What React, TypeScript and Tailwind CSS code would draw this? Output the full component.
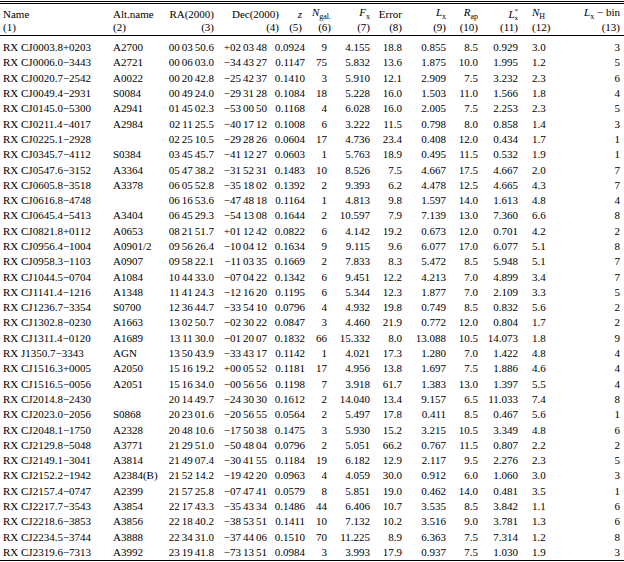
const rows: string[][] = [
  ["RX CJ0003.8+0203", "A2700", "00 03 50.6", "+02 03 48", "0.0924", "9", "4.155", "18.8", "0.855", "8.5", "0.929", "3.0", "3"],
  ["RX CJ0006.0−3443", "A2721", "00 06 03.0", "−34 43 27", "0.1147", "75", "5.832", "13.6", "1.875", "10.0", "1.995", "1.2", "5"],
  ["RX CJ0020.7−2542", "A0022", "00 20 42.8", "−25 42 37", "0.1410", "3", "5.910", "12.1", "2.909", "7.5", "3.232", "2.3", "6"],
  ["RX CJ0049.4−2931", "S0084", "00 49 24.0", "−29 31 28", "0.1084", "18", "5.228", "16.0", "1.503", "11.0", "1.566", "1.8", "4"],
  ["RX CJ0145.0−5300", "A2941", "01 45 02.3", "−53 00 50", "0.1168", "4", "6.028", "16.0", "2.005", "7.5", "2.253", "2.3", "5"],
  ["RX CJ0211.4−4017", "A2984", "02 11 25.5", "−40 17 12", "0.1008", "6", "3.222", "11.5", "0.798", "8.0", "0.858", "1.4", "3"],
  ["RX CJ0225.1−2928", "", "02 25 10.5", "−29 28 26", "0.0604", "17", "4.736", "23.4", "0.408", "12.0", "0.434", "1.7", "1"],
  ["RX CJ0345.7−4112", "S0384", "03 45 45.7", "−41 12 27", "0.0603", "1", "5.763", "18.9", "0.495", "11.5", "0.532", "1.9", "1"],
  ["RX CJ0547.6−3152", "A3364", "05 47 38.2", "−31 52 31", "0.1483", "10", "8.526", "7.5", "4.667", "17.5", "4.667", "2.0", "7"],
  ["RX CJ0605.8−3518", "A3378", "06 05 52.8", "−35 18 02", "0.1392", "2", "9.393", "6.2", "4.478", "12.5", "4.665", "4.3", "7"],
  ["RX CJ0616.8−4748", "", "06 16 53.6", "−47 48 18", "0.1164", "1", "4.813", "9.8", "1.597", "14.0", "1.613", "4.8", "4"],
  ["RX CJ0645.4−5413", "A3404", "06 45 29.3", "−54 13 08", "0.1644", "2", "10.597", "7.9", "7.139", "13.0", "7.360", "6.6", "8"],
  ["RX CJ0821.8+0112", "A0653", "08 21 51.7", "+01 12 42", "0.0822", "6", "4.142", "19.2", "0.673", "12.0", "0.701", "4.2", "2"],
  ["RX CJ0956.4−1004", "A0901/2", "09 56 26.4", "−10 04 12", "0.1634", "9", "9.115", "9.6", "6.077", "17.0", "6.077", "5.1", "8"],
  ["RX CJ0958.3−1103", "A0907", "09 58 22.1", "−11 03 35", "0.1669", "2", "7.833", "8.3", "5.472", "8.5", "5.948", "5.1", "7"],
  ["RX CJ1044.5−0704", "A1084", "10 44 33.0", "−07 04 22", "0.1342", "6", "9.451", "12.2", "4.213", "7.0", "4.899", "3.4", "7"],
  ["RX CJ1141.4−1216", "A1348", "11 41 24.3", "−12 16 20", "0.1195", "6", "5.344", "12.3", "1.877", "7.0", "2.109", "3.3", "5"],
  ["RX CJ1236.7−3354", "S0700", "12 36 44.7", "−33 54 10", "0.0796", "4", "4.932", "19.8", "0.749", "8.5", "0.832", "5.6", "2"],
  ["RX CJ1302.8−0230", "A1663", "13 02 50.7", "−02 30 22", "0.0847", "3", "4.460", "21.9", "0.772", "12.0", "0.804", "1.7", "2"],
  ["RX CJ1311.4−0120", "A1689", "13 11 30.0", "−01 20 07", "0.1832", "66", "15.332", "8.0", "13.088", "10.5", "14.073", "1.8", "9"],
  ["RX J1350.7−3343", "AGN", "13 50 43.9", "−33 43 17", "0.1142", "1", "4.021", "17.3", "1.280", "7.0", "1.422", "4.8", "4"],
  ["RX CJ1516.3+0005", "A2050", "15 16 19.2", "+00 05 52", "0.1181", "17", "4.956", "13.8", "1.697", "7.5", "1.886", "4.6", "4"],
  ["RX CJ1516.5−0056", "A2051", "15 16 34.0", "−00 56 56", "0.1198", "7", "3.918", "61.7", "1.383", "13.0", "1.397", "5.5", "4"],
  ["RX CJ2014.8−2430", "", "20 14 49.7", "−24 30 30", "0.1612", "2", "14.040", "13.4", "9.157", "6.5", "11.033", "7.4", "8"],
  ["RX CJ2023.0−2056", "S0868", "20 23 01.6", "−20 56 55", "0.0564", "2", "5.497", "17.8", "0.411", "8.5", "0.467", "5.6", "1"],
  ["RX CJ2048.1−1750", "A2328", "20 48 10.6", "−17 50 38", "0.1475", "3", "5.930", "15.2", "3.215", "10.5", "3.349", "4.8", "6"],
  ["RX CJ2129.8−5048", "A3771", "21 29 51.0", "−50 48 04", "0.0796", "2", "5.051", "66.2", "0.767", "11.5", "0.807", "2.2", "2"],
  ["RX CJ2149.1−3041", "A3814", "21 49 07.4", "−30 41 55", "0.1184", "19", "6.182", "12.9", "2.117", "9.5", "2.276", "2.3", "5"],
  ["RX CJ2152.2−1942", "A2384(B)", "21 52 14.2", "−19 42 20", "0.0963", "4", "4.059", "30.0", "0.912", "6.0", "1.060", "3.0", "3"],
  ["RX CJ2157.4−0747", "A2399", "21 57 25.8", "−07 47 41", "0.0579", "8", "5.851", "19.0", "0.462", "14.0", "0.481", "3.5", "1"],
  ["RX CJ2217.7−3543", "A3854", "22 17 43.3", "−35 43 34", "0.1486", "44", "6.406", "10.7", "3.535", "8.5", "3.842", "1.1", "6"],
  ["RX CJ2218.6−3853", "A3856", "22 18 40.2", "−38 53 51", "0.1411", "10", "7.132", "10.2", "3.516", "9.0", "3.781", "1.3", "6"],
  ["RX CJ2234.5−3744", "A3888", "22 34 31.0", "−37 44 06", "0.1510", "70", "11.225", "8.9", "6.363", "7.5", "7.314", "1.2", "8"],
  ["RX CJ2319.6−7313", "A3992", "23 19 41.8", "−73 13 51", "0.0984", "3", "3.993", "17.9", "0.937", "7.5", "1.030", "1.9", "3"],
];

// column widths add up to 620px; right-aligned unless listed in leftCols
const grid =
  "grid grid-cols-[110px_60px_44px_53px_38px_22px_43px_32px_44px_32px_40px_42px_60px]";
const leftCols = [0, 1, 11];

function Cell({
  i,
  children,
  className = "",
}: {
  i: number;
  children: React.ReactNode;
  className?: string;
}) {
  const left = leftCols.includes(i);
  return (
    <div
      className={`flex whitespace-nowrap ${left ? "justify-start" : "justify-end"} ${
        i === 0 || i === 1 ? "pl-[3px]" : ""
      } ${i === 11 ? "pl-[14px]" : ""} ${className}`}
    >
      {children}
    </div>
  );
}

// sexagesimal coords use tighter spacing than a normal word space
function Coord({ value }: { value: string }) {
  return (
    <span className="flex gap-[2px]">
      {value.split(" ").map((p, k) => (
        <span key={k}>{p}</span>
      ))}
    </span>
  );
}

const sub = "text-[8px] align-sub not-italic";

// header labels that sit a little off their column edge
const headShift = ["", "", "", "mr-[-12px]", "pr-[3px]", "mr-[-4px]", "", "", "", "", "", "", ""];

const head: React.ReactNode[] = [
  "Name",
  "Alt.name",
  "RA(2000)",
  "Dec(2000)",
  <i>z</i>,
  <span>
    <i>N</i>
    <span className={sub}>gal.</span>
  </span>,
  <span>
    <i>F</i>
    <span className={sub}>x</span>
  </span>,
  "Error",
  <span>
    <i>L</i>
    <span className={sub}>x</span>
  </span>,
  <span>
    <i>R</i>
    <span className={sub}>ap</span>
  </span>,
  <span className="inline-flex items-center">
    <i>L</i>
    <span className="inline-flex flex-col text-[7px] leading-[7px] mt-[2px]">
      <span>*</span>
      <span>x</span>
    </span>
  </span>,
  <span>
    <i>N</i>
    <span className={sub}>H</span>
  </span>,
  <span>
    <i>L</i>
    <span className={sub}>x</span> − bin
  </span>,
];

export default function App() {
  return (
    <div className="w-[624px] h-[562px] bg-white text-black font-['Liberation_Serif',serif] text-[11px] leading-none overflow-hidden">
      <div className="h-px bg-black mt-px" />
      <div className="h-px bg-black mt-px" />
      <div className="w-[620px]">
        <div className={`${grid} h-[14px] items-center mt-[2px]`}>
          {head.map((h, i) => (
            <Cell key={i} i={i} className={headShift[i]}>
              {h}
            </Cell>
          ))}
        </div>
        <div className={`${grid} h-[14px] items-center`}>
          {head.map((_, i) => (
            <Cell key={i} i={i} className={headShift[i]}>
              ({i + 1})
            </Cell>
          ))}
        </div>
      </div>
      <div className="h-px bg-black mt-px" />
      <div className="w-[620px] pt-[4px]">
        {rows.map((r, ri) => (
          <div key={ri} className={`${grid} h-[15.3px] items-center`}>
            {r.map((c, i) => (
              <Cell key={i} i={i}>
                {i === 2 || i === 3 ? <Coord value={c} /> : c}
              </Cell>
            ))}
          </div>
        ))}
      </div>
      <div className="h-px bg-black" />
    </div>
  );
}
